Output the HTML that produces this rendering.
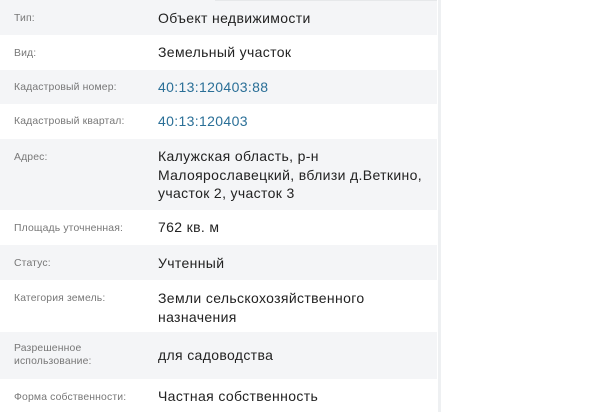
<!DOCTYPE html>
<html><head><meta charset="utf-8"><style>
body{margin:0;width:600px;height:412px;background:#fff;font-family:"Liberation Sans","Noto Sans CJK SC",sans-serif;overflow:hidden;position:relative}
.t{position:absolute;left:0;top:0;width:437px}
.r{position:relative;width:437px}
.g{background:#f4f5f7}
.l{position:absolute;left:14px;font-size:10.4px;color:#777;line-height:13px;letter-spacing:0.15px;white-space:nowrap}
.v{position:absolute;left:158px;font-size:14px;color:#222;line-height:18.5px;letter-spacing:0.35px;white-space:nowrap}
.a{color:#2a6f97}
.line{position:absolute;left:438px;top:0;width:3px;height:412px;background:#eef0f2}
.top{position:absolute;left:215px;top:0;width:222px;height:1px;background:#e6e8ea}
</style></head><body>
<div class="t">
<div class="r g" style="height:35px"><div class="l" style="top:12px">Тип:</div><div class="v" style="top:9px">Объект недвижимости</div></div>
<div class="r" style="height:35px"><div class="l" style="top:12px">Вид:</div><div class="v" style="top:8px">Земельный участок</div></div>
<div class="r g" style="height:34px"><div class="l" style="top:11px">Кадастровый номер:</div><div class="v a" style="top:8px">40:13:120403:88</div></div>
<div class="r" style="height:35px"><div class="l" style="top:11px">Кадастровый квартал:</div><div class="v a" style="top:8px">40:13:120403</div></div>
<div class="r g" style="height:71px"><div class="l" style="top:12px">Адрес:</div><div class="v" style="top:8px">Калужская область, р-н<br>Малоярославецкий, вблизи д.Веткино,<br>участок 2, участок 3</div></div>
<div class="r" style="height:35px"><div class="l" style="top:12px">Площадь уточненная:</div><div class="v" style="top:8px">762 кв. м</div></div>
<div class="r g" style="height:35px"><div class="l" style="top:12px">Статус:</div><div class="v" style="top:9px">Учтенный</div></div>
<div class="r" style="height:52px"><div class="l" style="top:12px">Категория земель:</div><div class="v" style="top:9px">Земли сельскохозяйственного<br>назначения</div></div>
<div class="r g" style="height:47px"><div class="l" style="top:10px">Разрешенное<br>использование:</div><div class="v" style="top:14px">для садоводства</div></div>
<div class="r" style="height:33px"><div class="l" style="top:12px">Форма собственности:</div><div class="v" style="top:8px">Частная собственность</div></div>
</div>
<div class="top"></div>
<div class="line"></div>
</body></html>
